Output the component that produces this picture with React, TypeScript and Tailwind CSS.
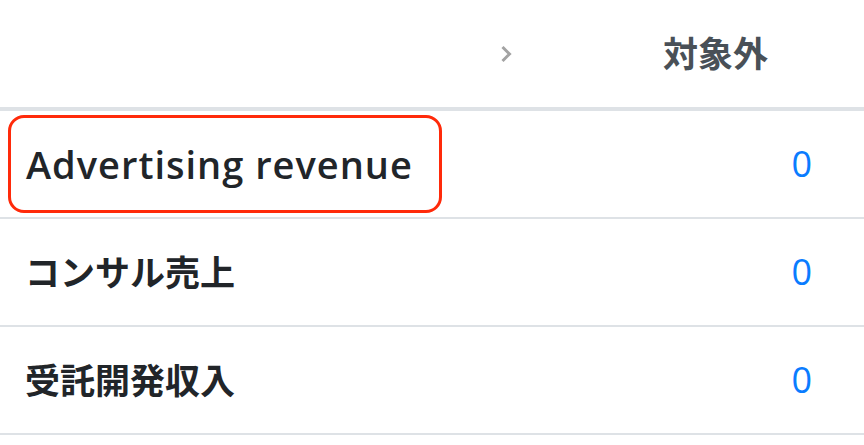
const rows = [
  { label: "Advertising revenue", value: 0, highlight: true },
  { label: "コンサル売上", value: 0 },
  { label: "受託開発収入", value: 0 },
];

function Chevron() {
  return (
    <svg width="12" height="18" viewBox="0 0 12 18" className="shrink-0">
      <polyline
        points="2.5,2 9.5,9 2.5,16"
        fill="none"
        stroke="#a3a3a3"
        strokeWidth="3"
      />
    </svg>
  );
}

export default function App() {
  return (
    <div
      className="w-[864px] h-[445px] bg-white overflow-hidden text-[#212529]"
      style={{ fontFamily: '"Open Sans", "Noto Sans CJK JP", sans-serif' }}
    >
      {/* header */}
      <div className="h-[111px] flex items-center border-b-4 border-[#dee2e6]">
        <div className="w-[500px]" />
        <Chevron />
        <div className="w-[151px]" />
        <span className="text-[35px] font-semibold text-[#495057] leading-none">
          対象外
        </span>
      </div>

      {rows.map((r) => (
        <div
          key={r.label}
          className="h-[108px] flex items-center justify-between border-b-2 border-[#dee2e6]"
        >
          {r.highlight ? (
            <div className="ml-[8px] w-[434px] h-[98px] border-[3px] border-[#ff2a0a] rounded-[16px] flex items-center pl-[15px]">
              <span className="text-[38px] font-semibold leading-none tracking-[1px]">
                {r.label}
              </span>
            </div>
          ) : (
            <span className="pl-[25px] text-[35px] font-bold leading-none">
              {r.label}
            </span>
          )}
          <span className="pr-[52px] text-[36px] text-[#0a7cff] leading-none">
            {r.value}
          </span>
        </div>
      ))}
    </div>
  );
}
